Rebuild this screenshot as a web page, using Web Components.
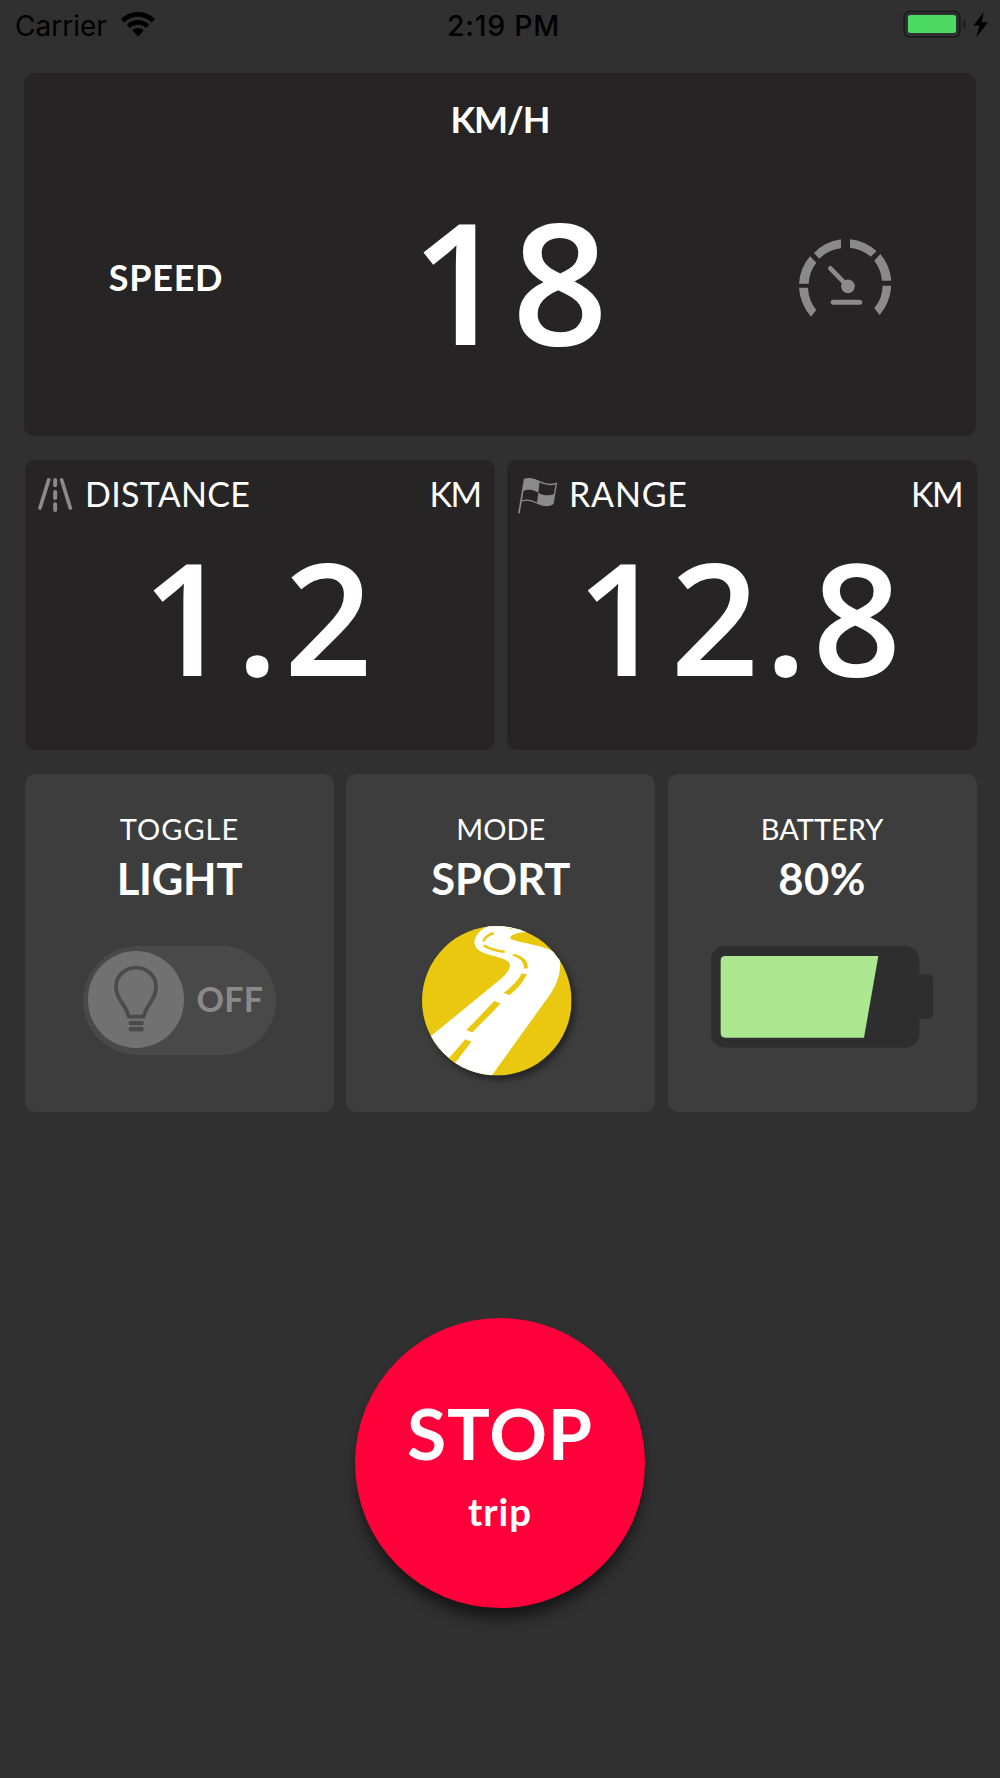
<!DOCTYPE html>
<html lang="en">
<head>
<meta charset="utf-8">
<title>Trip</title>
<style>
  html, body { margin: 0; background: #303030; }
  body { width: 1000px; height: 1778px; overflow: hidden; font-family: Lato, "Open Sans", sans-serif; color: #fff; }
</style>
</head>
<body>
<ride-dashboard></ride-dashboard>

<script>
const define = (name, html) => {
  customElements.define(name, class extends HTMLElement {
    connectedCallback() {
      if (this.shadowRoot) { return; }
      this.attachShadow({ mode: 'open' }).innerHTML = html;
    }
  });
};

define('status-bar', `
  <style>
    :host {
      display: grid; grid-template-columns: 1fr auto 1fr; align-items: start;
      height: 73px; padding: 0 12px 0 15px; box-sizing: border-box;
      font: 28px/30px Inter, sans-serif; color: #000;
    }
    .left { display: flex; padding-top: 10.5px; }
    .time { padding: 10.5px 0 0 4px; font-size: 28.5px; font-weight: 500; letter-spacing: .7px; }
    .right { display: flex; justify-content: flex-end; padding-top: 10px; }
    .wifi { margin: 1.5px 0 0 14px; }
  </style>
  <div class="left">
    <span>Carrier</span>
    <svg class="wifi" width="34" height="25" viewBox="0 0 34 26" preserveAspectRatio="none">
      <path d="M0 7.5C9-2.5 25-2.5 34 7.5L30.700 11C23 3 11 3 3.300 11Z"/>
      <path d="M5.700 13.200C12 6.800 22 6.800 28.300 13.200L25 16.600C20.500 12 13.500 12 9 16.600Z"/>
      <path d="M11.300 19C14.500 16.300 19.500 16.300 22.700 19L17 25.500Z"/>
    </svg>
  </div>
  <div class="time">2:19 PM</div>
  <div class="right">
    <svg width="85" height="29" viewBox="0 0 85 29">
      <rect x="1.200" y="1.500" width="55.500" height="25.500" rx="5.500" fill="none" stroke="#1d1d1d" stroke-width="2"/>
      <rect x="5" y="5" width="48" height="18" rx="2.500" fill="#4cd964"/>
      <path d="M60 9Q63 10.500 63 14T60 19Z" fill="#1d1d1d"/>
      <path d="M80.800 2L70.500 15.500H76.500L73.200 27.500L85 12.200H78.500Z"/>
    </svg>
  </div>`);

define('speed-card', `
  <style>
    :host {
      display: block; width: 952px; height: 363px; border-radius: 10px;
      padding-top: 28px; box-sizing: border-box; background: #262425;
    }
    .unit { text-align: center; font-size: 36px; line-height: 36px; font-weight: 700; letter-spacing: -1px; }
    .row { display: grid; grid-template-columns: 284px 408px 258px; justify-items: center; align-items: start; }
    .name { margin-top: 122px; font-size: 36px; line-height: 1; font-weight: 700; letter-spacing: .7px; }
    .value { margin-top: 59px; font: 600 168px/1 "Open Sans", sans-serif; letter-spacing: 5px; }
    svg { margin-top: 102px; }
  </style>
  <div class="unit"><slot name="unit"></slot></div>
  <div class="row">
    <div class="name"><slot name="name"></slot></div>
    <div class="value"><slot></slot></div>
    <svg width="92.300" height="78" viewBox="57 58 277 234" fill="#8a8a8a">
      <path d="M183 59V86A112 112 0 0 0 118 117L102 100A139 139 0 0 1 183 59Z"/>
      <path d="M90 110L109 129A112 112 0 0 0 86 192H57A139 139 0 0 1 90 110Z"/>
      <path d="M57 204H84A112 112 0 0 0 109 271L93 291A150 150 0 0 1 57 204Z"/>
      <path d="M210 59A139 139 0 0 1 290 95L272 111A112 112 0 0 0 210 84Z"/>
      <path d="M301 103A139 139 0 0 1 334 183H306A112 112 0 0 0 283 123Z"/>
      <path d="M308 198H334A150 150 0 0 1 299 286L283 266A112 112 0 0 0 308 198Z"/>
      <path d="M151 146L204 200" stroke="#8a8a8a" stroke-width="14" stroke-linecap="round"/>
      <circle cx="204" cy="200" r="20.500"/>
      <rect x="152" y="240" width="95" height="15.500" rx="7.500"/>
    </svg>
  </div>`);

define('stat-card', `
  <style>
    :host { display: block; height: 290px; border-radius: 10px; background: #262425; }
    header { display: flex; align-items: flex-start; height: 52px; padding: 0 14.5px 0 var(--inset, 12px); font-size: 34px; line-height: 1; }
    .icon { flex: none; width: var(--icon-width, 48px); padding-top: 17px; }
    .label, .unit { padding-top: 17px; letter-spacing: var(--tracking, .3px); }
    .unit { margin-left: auto; letter-spacing: -1.5px; }
    .value {
      margin: 26px 0 0; text-align: center;
      font: 600 155px/1 "Open Sans", sans-serif; letter-spacing: 5.5px; white-space: nowrap;
    }
  </style>
  <header>
    <div class="icon"><slot name="icon"></slot></div>
    <div class="label"><slot name="label"></slot></div>
    <div class="unit"><slot name="unit"></slot></div>
  </header>
  <div class="value"><slot></slot></div>`);

define('road-icon', `
  <style>:host { display: block; height: 36px; }</style>
  <svg width="37" height="36" viewBox="51 173 111 108" fill="none" stroke="#8a8a8a" stroke-width="11" stroke-linecap="round">
    <path d="M86 182L60 266M125 182L151 266"/>
    <path d="M105.500 182V198M105.500 218V236M105.500 255V272" stroke-width="12"/>
  </svg>`);

define('flag-icon', `
  <style>:host { display: block; height: 37px; }</style>
  <svg width="41" height="37" viewBox="52 168 123 111">
    <path d="M75 176C88 170 104 174 119 182C136 191 153 193 170 187L160 248C144 258 128 254 111 246C95 237 80 235 67 240" fill="none" stroke="#8a8a8a" stroke-width="4"/>
    <path d="M75 175L58 275" stroke="#8a8a8a" stroke-width="5" stroke-linecap="round"/>
    <path d="M75 174C90 170 105 174 120 182L116 215C100 204 85 204 70 210Z" fill="#8a8a8a"/>
    <path d="M116 215C133 225 148 225 165 219L160 248C144 258 128 254 112 246Z" fill="#8a8a8a"/>
  </svg>`);

define('control-card', `
  <style>
    :host {
      display: flex; flex-direction: column; align-items: center; height: 338px;
      border-radius: 10px; padding-top: 40px; box-sizing: border-box; background: #3d3d3d;
    }
    .label { height: 43px; font-size: 29px; line-height: 29px; letter-spacing: var(--label-tracking, 0); }
    .value { height: 89px; font-size: 43.500px; line-height: 1; font-weight: 700; letter-spacing: var(--value-tracking, 0); }
  </style>
  <div class="label"><slot name="label"></slot></div>
  <div class="value"><slot name="value"></slot></div>
  <slot></slot>`);

define('light-toggle', `
  <style>
    :host {
      display: flex; align-items: center; width: 193px; height: 108.500px; margin-right: 1px;
      padding: 0 5px; box-sizing: border-box; border-radius: 55px; background: #494949;
    }
    .knob { display: grid; place-items: center; width: 96.500px; height: 96.500px; border-radius: 50%; background: #717171; margin-bottom: 2px; }
    .text { margin: -3.5px 0 0 12.5px; font-size: 34px; line-height: 1; font-weight: 700; color: #8a8a8a; letter-spacing: .3px; }
  </style>
  <div class="knob">
    <svg width="46" height="68" viewBox="279 587 138 204">
      <path d="M288 652A60 57 0 0 1 408 652C408 692 380 702 371 742H326C317 702 288 692 288 652Z" fill="none" stroke="#4b4b4b" stroke-width="11.500" stroke-linejoin="round"/>
      <rect x="326" y="755" width="45" height="13" rx="5" fill="#4b4b4b"/>
      <rect x="326" y="773" width="45" height="13.500" rx="5" fill="#4b4b4b"/>
    </svg>
  </div>
  <span class="text"><slot></slot></span>`);

define('mode-badge', `
  <style>
    :host { display: block; width: 149.500px; height: 149.500px; margin: -20px 8px 0 0; border-radius: 50%; box-shadow: 3px 4px 6px rgba(0, 0, 0, .42); }
    svg { display: block; }
  </style>
  <svg width="149.500" height="149.500" viewBox="246 468 448 448">
    <clipPath id="disc"><circle cx="470" cy="692" r="224"/></clipPath>
    <g clip-path="url(#disc)">
      <rect x="246" y="468" width="448" height="448" fill="#eac810"/>
      <path d="M462 462C425 472 402 497 403 519C405 541 430 550 462 558C500 569 512 575 509 590C505 608 487 624 460 645L230 833L300 960H425L455 916L627 677C649 645 660 617 660 580L663 560C640 541 617 534 585 526C550 517 518 513 510 505C506 498 530 487 558 486L540 462Z" fill="#fff"/>
      <path d="M507 474H518L511 478Z" fill="#eac810"/>
      <g fill="none" stroke="#eac810" stroke-width="7.500">
        <path d="M461 490C448 492 433 503 430 514"/>
        <path d="M431 526C450 538 470 543 494 545"/>
      </g>
      <g fill="#eac810">
        <path d="M514 556L524 552C552 560 566 576 563 595H552C551 575 540 564 514 556Z"/>
        <path d="M545 610L560 612C550 636 532 656 508 675L490 669C514 650 532 634 545 610Z"/>
        <path d="M463 693L481 700C455 730 425 757 397 787L379 780Z"/>
        <path d="M376 807L394 815L344 880L325 866Z"/>
      </g>
    </g>
  </svg>`);

define('battery-gauge', `
  <style>
    :host { display: block; width: 222px; height: 102px; }
    svg { display: block; }
  </style>
  <svg width="222" height="102" viewBox="153 528 666 306">
    <rect x="153" y="528" width="625" height="305" rx="42" fill="#2e2e2e"/>
    <path d="M770 613H803Q819 613 819 629V730Q819 746 803 746H770Z" fill="#2e2e2e"/>
    <path d="M196 558H655L612 803H196Q182 803 182 789V572Q182 558 196 558Z" fill="#abe890"/>
  </svg>`);

define('trip-button', `
  <style>
    :host {
      display: flex; flex-direction: column; align-items: center; width: 290px; height: 290px;
      padding-top: 79px; box-sizing: border-box; border-radius: 50%; background: #ff003a;
      box-shadow: 0 12px 13px -2px rgba(0, 0, 0, .55); font-weight: 700;
    }
    .action { height: 95px; font-size: 71.5px; line-height: 1; letter-spacing: .9px; }
    .what { font-size: 38.500px; line-height: 1; letter-spacing: .9px; }
  </style>
  <span class="action"><slot></slot></span>
  <span class="what"><slot name="what"></slot></span>`);

define('ride-dashboard', `
  <style>
    :host { display: flex; flex-direction: column; width: 1000px; height: 1778px; background: #303030; }
    status-bar, speed-card, .stats, .controls, trip-button { flex: none; }
    speed-card { margin-left: 24px; }
    .stats { display: grid; grid-template-columns: 470px 470px; gap: 11.5px; margin: 24px 0 0 25px; }
    .controls { display: grid; grid-template-columns: repeat(3, 309px); gap: 12.3px; margin: 24px 0 0 25px; }
    trip-button { margin: 206px 0 0 355px; }
    .range { --icon-width: 52px; --inset: 10.5px; --tracking: .8px; }
    .light { --label-tracking: 1px; --value-tracking: -0.2px; }
    .battery { --value-tracking: .6px; }
  </style>
  <status-bar></status-bar>
  <speed-card>
    <span slot="unit">KM/H</span>
    <span slot="name">SPEED</span>
    18
  </speed-card>
  <div class="stats">
    <stat-card class="distance">
      <road-icon slot="icon"></road-icon>
      <span slot="label">DISTANCE</span>
      <span slot="unit">KM</span>
      1.2
    </stat-card>
    <stat-card class="range">
      <flag-icon slot="icon"></flag-icon>
      <span slot="label">RANGE</span>
      <span slot="unit">KM</span>
      12.8
    </stat-card>
  </div>
  <div class="controls">
    <control-card class="light">
      <span slot="label">TOGGLE</span>
      <span slot="value">LIGHT</span>
      <light-toggle>OFF</light-toggle>
    </control-card>
    <control-card class="mode">
      <span slot="label">MODE</span>
      <span slot="value">SPORT</span>
      <mode-badge></mode-badge>
    </control-card>
    <control-card class="battery">
      <span slot="label">BATTERY</span>
      <span slot="value">80%</span>
      <battery-gauge></battery-gauge>
    </control-card>
  </div>
  <trip-button>STOP<span slot="what">trip</span></trip-button>`);
</script>
</body>
</html>
